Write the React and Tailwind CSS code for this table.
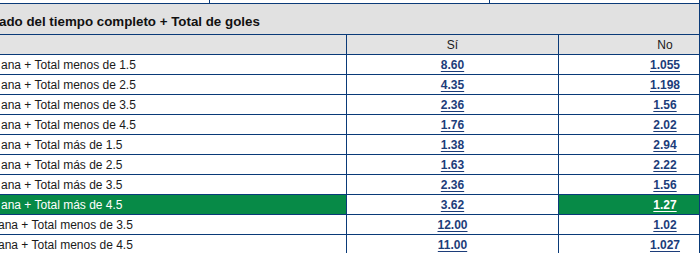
import React from "react";

const rows = [
  { label: "ana + Total menos de 1.5", yes: "8.60", no: "1.055" },
  { label: "ana + Total menos de 2.5", yes: "4.35", no: "1.198" },
  { label: "ana + Total menos de 3.5", yes: "2.36", no: "1.56" },
  { label: "ana + Total menos de 4.5", yes: "1.76", no: "2.02" },
  { label: "ana + Total más de 1.5", yes: "1.38", no: "2.94" },
  { label: "ana + Total más de 2.5", yes: "1.63", no: "2.22" },
  { label: "ana + Total más de 3.5", yes: "2.36", no: "1.56" },
  { label: "ana + Total más de 4.5", yes: "3.62", no: "1.27", rowHit: true, noHit: true },
  { label: "ana + Total menos de 3.5", yes: "12.00", no: "1.02", shift: true },
  { label: "ana + Total menos de 4.5", yes: "11.00", no: "1.027", shift: true },
];

const OddLink = ({ value, light }) => (
  <a
    href="#"
    className={`font-bold underline underline-offset-[2px] ${light ? "text-white" : "text-[#1c3d7a]"}`}
  >
    {value}
  </a>
);

export default function App() {
  return (
    <div
      className="w-[700px] h-[253px] overflow-hidden bg-white border-r border-[#0a3a78] text-[#1a1a1a]"
      style={{ fontFamily: '"Liberation Sans", Arial, sans-serif' }}
    >
      <div className="w-[771px]">
        {/* tail of the previous table */}
        <div className="flex h-[4px] border-b border-[#0a3a78]">
          <div className="w-[210px] border-r border-[#0a3a78]" />
          <div className="w-[280px] border-r border-[#0a3a78]" />
        </div>

        {/* market title */}
        <div className="h-[31px] bg-[#e1e1e1] border-b border-[#0a3a78] flex items-center pt-[5px]">
          <span className="text-[13.33px] font-bold whitespace-nowrap -ml-[1px] text-[#111]">
            ado del tiempo completo + Total de goles
          </span>
        </div>

        {/* column heads */}
        <div className="flex h-[20px] bg-[#e3e3e3] border-b border-[#0a3a78] text-[12px]">
          <div className="w-[347px] border-r border-[#0a3a78]" />
          <div className="w-[212px] border-r border-[#0a3a78] flex items-center justify-center">Sí</div>
          <div className="w-[212px] flex items-center justify-center">No</div>
        </div>

        {rows.map((r, i) => (
          <div key={i} className="flex h-[20px] border-b border-[#0a3a78] text-[12px]">
            <div
              className={`w-[347px] border-r border-[#0a3a78] flex items-center overflow-hidden whitespace-nowrap ${
                r.rowHit ? "bg-[#078a47] text-white" : ""
              }`}
            >
              <span className={r.shift ? "-ml-[2px]" : "pl-[1px]"}>{r.label}</span>
            </div>
            <div className="w-[212px] border-r border-[#0a3a78] flex items-center justify-center">
              <OddLink value={r.yes} light={false} />
            </div>
            <div
              className={`w-[212px] flex items-center justify-center ${r.noHit ? "bg-[#078a47]" : ""}`}
            >
              <OddLink value={r.no} light={r.noHit} />
            </div>
          </div>
        ))}
      </div>
    </div>
  );
}
